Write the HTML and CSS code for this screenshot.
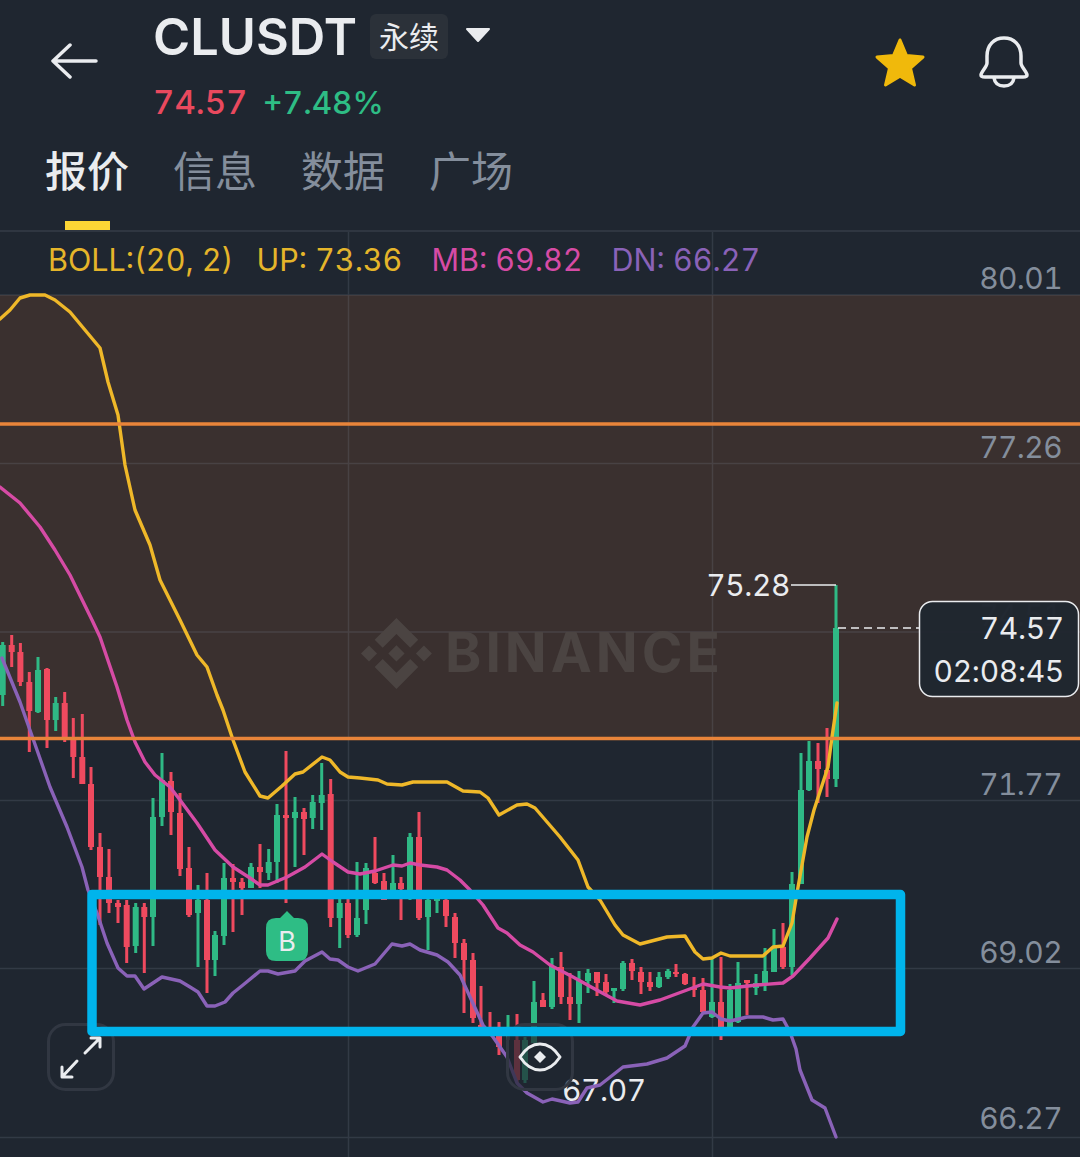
FILE: index.html
```html
<!DOCTYPE html>
<html lang="zh">
<head>
<meta charset="utf-8">
<title>CLUSDT</title>
<link rel="stylesheet" href="styles.css">
</head>
<body>
<div class="page">
  <header class="top">
    <svg class="back" width="48" height="40" viewBox="0 0 48 40"><path class="ico" d="M3 18H46M20 2 3 18l17 16"/></svg>
    <div class="titles">
      <div class="title-row">
        <h1 class="symbol">CLUSDT</h1>
        <span class="tag">永续</span>
        <svg class="caret" width="26" height="16" viewBox="0 0 26 16"><path class="caret-fill" d="M2 2H24L13 14Z"/></svg>
      </div>
      <div class="price-row"><span class="last">74.57</span><span class="chg">+7.48%</span></div>
    </div>
    <div class="actions">
      <svg width="54" height="54" viewBox="0 0 54 54"><path class="star" d="M27 5 33.500 20.500 50 22 37.500 33 41.500 50 27 41.200 12.500 50 16.500 33 4 22 20.500 20.500Z"/></svg>
      <svg width="54" height="54" viewBox="0 0 54 54"><path class="bell" d="M10 21C10 10 17 3 27 3S44 10 44 21V28C44 32 50 37 50 40Q50 42 46 42H8Q4 42 4 40C4 37 10 32 10 28ZM17 43C18 49 22 51 27 51S36 49 37 43"/></svg>
    </div>
  </header>
  <nav class="tabs">
    <a class="tab on">报价</a>
    <a class="tab">信息</a>
    <a class="tab">数据</a>
    <a class="tab">广场</a>
  </nav>
  <section class="chart">
    <div class="legend">
      <span class="lg-y">BOLL:(20, 2)</span>
      <span class="lg-y">UP: 73.36</span>
      <span class="lg-m">MB: 69.82</span>
      <span class="lg-p">DN: 66.27</span>
    </div>
    <svg class="plot" width="1080" height="925" viewBox="0 232 1080 925">
      <rect class="zone" x="0" y="295" width="1080" height="443"/>
      <path class="grid" d="M0 295H1080M0 463.500H1080M0 632H1080M0 800.500H1080M0 968.500H1080M0 1137.500H1080M348.500 232V1157M712.500 232V1157"/>
      <g class="mark">
        <path transform="translate(361 618) scale(.56)" d="M38.730 53.200 63.310 28.620 87.900 53.210 102.200 38.910 63.310 0 24.430 38.900ZM0 63.310 14.300 49 28.600 63.300 14.300 77.600ZM38.730 73.410 63.310 97.990 87.900 73.400 102.200 87.700 63.310 126.610 24.420 87.720ZM98.020 63.310 112.320 49 126.620 63.300 112.320 77.600ZM77.830 63.300 63.310 48.780 48.790 63.300 63.310 77.830Z"/>
        <text class="mark-t" x="445" y="672">BINANCE</text>
      </g>
      <path class="wick red" d="M11.700 635V667M20.400 643V686M29.300 672V752M47 668V748M64.700 692V742M73.300 718V778M82.300 714V784M91 767V850M100 833V925M109 849V913M118 900V923M126.700 900V963M144.300 903V973M171 772V835M180 793V876M189 847V917M207 873V993M233 864V932M242 878V915M260 844V888M286 751V903M304 808V855M330.700 779V927M348 890V938M375 837V884M384 873V900M401 877V920M419 812V920M446 893V927M455 913V958M464 939V1013M473 953V1023M481 986V1028M490 1012V1036M499 1022V1055M517 1014V1083M543 993V1007M561 952V1004M570 973V1020M597 972V996M606 974V995M632 959V980M641 967V994M650 972V991M676 964V977M685 973V985M694 977V997M703 978V1013M721 957V1040M747 980V1015M783 923V969M818 743V803M827 728V797"/>
      <path class="body red" d="M11.700 645V652M20.400 652V682M29.300 682V711M47 669V720M64.700 703V740M73.300 737V757M82.300 757V784M91 784V847M100 847V877M109 877V903M118 903V907M126.700 905V947M144.300 907V917M171 781V812M180 813V869M189 868V915M207 900V960M233 878V882M242 882V888M260 867V872M286 815V818M304 812V819M330.700 794V918M348 903V935M375 873V883M384 881V900M401 883V889M419 837V918M446 900V916M455 917V943M464 943V960M473 960V1018M481 1025V1033M499 1027V1047M517 1040V1080M543 1000V1007M561 967V997M570 997V1004M597 972V983M606 982V992M632 963V971M641 972V982M650 982V987M676 972V974M685 974V984M694 987V990M703 990V1012M721 1002V1027M747 980V983M783 947V967M818 761V769M827 770V779"/>
      <path class="wick grn" d="M2.700 642V706M38 657V713M55.700 697V731M135.700 903V953M153 798V946M162 753V826M198 885V967M215 931V976M224 863V945M251 863V888M268.700 849V880M277 804V883M295 797V867M312.700 795V829M321.700 763V830M339.700 890V948M357 862V937M366 863V924M393 855V895M410 833V900M428 893V950M437 893V913M508 1015V1040M525 1037V1083M534 981V1043M552 958V1009M579 971V1023M588 969V993M614 988V1003M623 961V991M659 972V988M668 969V979M712 958V1018M730 984V1027M738 962V1023M756 974V995M765 948V991M774 929V972M792 872V975M801 753V884M809 741V791M836 585V787"/>
      <path class="body grn" d="M2.700 645V695M38 670V712M55.700 703V720M135.700 907V946M153 817V917M162 780V817M198 900V913M215 935V960M224 878V936M251 867V888M268.700 862V873M277 815V862M295 812V818M312.700 802V818M321.700 795V803M339.700 903V918M357 918V935M366 868V910M393 883V895M410 837V895M428 900V917M437 893V901M525 1040V1080M534 1002V1043M552 966V1007M579 980V1004M588 973V981M614 988V991M623 963V989M659 977V987M668 971V977M712 1002V1017M730 990V1027M738 983V1022M756 983V988M765 971V983M774 947V972M792 884V967M801 790V884M809 761V790M836 628V779"/>
      <text class="hl start" x="562" y="1101">67.07</text>
      <polyline class="ln purple" points="2,658 20,702 37,750 50,787 67,827 82,867 88,890 97,913 107,943 118,968 127,976 135,976 144,989 162,977 180,981 190,987 198,992 207,1006 215,1006 225,1002 233,993 243,985 260,971 268,971 278,974 295,971 305,961 322,952 330,959 338,960 348,967 358,971 375,964 392,944 402,946 410,944 420,950 437,955 448,962 460,975 470,997 483,1025 493,1037 507,1057 517,1083 527,1093 543,1102 552,1099 570,1103 578,1102 587,1088 600,1085 623,1067 647,1064 667,1058 685,1046 693,1027 703,1013 712,1012 721,1019 730,1021 747,1017 763,1017 773,1020 783,1019 790,1032 796,1049 800,1070 812,1100 825,1108 836,1137"/>
      <polyline class="ln magenta" points="0,487 20,503 40,527 55,550 70,575 92,620 100,637 117,687 127,720 135,742 145,762 155,775 170,787 180,800 197,823 215,850 233,867 250,878 260,885 268,885 287,877 305,867 322,854 333,862 348,872 360,874 375,871 393,865 402,866 410,863 420,865 437,867 447,870 460,880 470,890 483,905 498,928 507,933 520,945 533,952 550,965 573,977 593,988 617,1001 640,1005 660,1000 687,990 703,984 720,987 730,988 757,985 783,983 793,976 810,958 828,938 837,919"/>
      <polyline class="ln yellow" points="0,319 10,310 20,298 30,295 45,295 55,300 70,312 85,330 100,348 108,382 118,415 125,465 135,510 150,545 160,580 180,620 197,655 207,667 217,695 223,710 233,740 245,772 260,796 268,798 282,786 295,774 303,772 322,757 330,760 340,772 348,777 360,778 378,780 387,784 402,785 413,782 447,782 463,791 480,792 488,798 499,815 517,805 527,804 535,808 560,837 578,860 588,887 600,900 615,925 623,935 640,944 667,937 685,936 695,952 703,959 712,958 721,953 730,956 763,956 773,947 783,946 792,923 797,893 807,837 814,810 828,767 832,737 837,703"/>
      <path class="orange" d="M0 424H1080M0 738.500H1080"/>
      <text class="axis" x="1062" y="289">80.01</text>
      <text class="axis" x="1062" y="458">77.26</text>
      <text class="axis dim" x="1062" y="626">74.51</text>
      <text class="axis" x="1062" y="795">71.77</text>
      <text class="axis" x="1062" y="963">69.02</text>
      <text class="axis" x="1062" y="1129">66.27</text>
      <path class="leader" d="M791 585H836"/>
      <text class="hl" x="790" y="596">75.28</text>
      <path class="dash" d="M838 628H919"/>
      <rect class="ptag" x="919.500" y="601.500" width="159" height="95" rx="13"/>
      <text class="pt" x="1064" y="639">74.57</text>
      <text class="pt" x="1064" y="682">02:08:45</text>
      <path class="badge" d="M287 911 294 918H298Q308 918 308 928V951Q308 961 298 961H276Q266 961 266 951V928Q266 918 276 918H280Z"/>
      <text class="badge-t" x="287" y="951">B</text>
      <rect class="btn" x="48.500" y="1024.500" width="65" height="65" rx="17"/>
      <rect class="btn see" x="507.500" y="1024.500" width="65" height="65" rx="17"/>
      <path class="box" d="M92 894.500H900.500V1031.500H92Z"/>
      <path class="ico thin" d="M85 1053 100 1038M91 1038H100V1047M77 1061 62 1077M62 1067V1077H72"/>
      <path class="ico thin" d="M520 1057C526 1048 533 1044 540 1044S554 1048 560 1057C554 1066 547 1070 540 1070S526 1066 520 1057Z"/>
      <path class="eye-dot" d="M540 1051 546 1057 540 1063 534 1057Z"/>
    </svg>
  </section>
</div>
</body>
</html>
```
FILE: styles.css
```css
*{box-sizing:border-box;margin:0;padding:0}
html,body{background:#1f2630}
body{width:1080px;height:1157px;overflow:hidden;font-family:Inter,"Noto Sans CJK SC",sans-serif;color:#eaecef;font-variant-numeric:tabular-nums}
.page{width:1080px;height:1157px;display:flex;flex-direction:column}
.top{height:132px;display:flex;align-items:flex-start;padding:14px 52px 0 50px}
.back{margin-top:29px;margin-right:55px;flex:none}
.titles{display:flex;flex-direction:column;flex:1}
.title-row{display:flex;align-items:center;height:45px}
.symbol{font-size:50.500px;font-weight:600;letter-spacing:0;line-height:45px;color:#eaecef}
.tag{margin-left:13px;width:78px;height:45px;border-radius:6px;background:#2b3139;font-size:30px;line-height:43px;text-align:center;font-family:"Noto Sans CJK SC",sans-serif;font-weight:400}
.caret{margin-left:17px;margin-top:-4px}
.caret-fill{fill:#eaecef;stroke:#eaecef;stroke-width:2;stroke-linejoin:round}
.price-row{display:flex;gap:15px;align-items:baseline;margin-top:23px;font-size:33px;line-height:40px;font-weight:500}
.last{color:#e9495e}
.chg{color:#2ebd85;font-size:31.500px}
.actions{display:flex;gap:50px;margin-top:21px;margin-right:-3px}
.ico{fill:none;stroke:#eaecef;stroke-width:3.500;stroke-linecap:round;stroke-linejoin:round}
.ico.thin{stroke-width:3}
.star{fill:#f0b90b;stroke:#f0b90b;stroke-width:3;stroke-linejoin:round}
.bell{fill:none;stroke:#eaecef;stroke-width:3.500;stroke-linejoin:round;stroke-linecap:round}
.tabs{height:100px;display:flex;gap:44px;padding:0 0 0 45px;border-bottom:2px solid #2f3641}
.tab{position:relative;height:98px;font-family:"Noto Sans CJK SC",sans-serif;font-size:42px;line-height:74px;color:#848e9c;font-weight:400}
.tab.on{color:#eaecef;font-weight:500}
.tab.on::after{content:"";position:absolute;left:20px;bottom:0;width:45px;height:9px;background:#fcd535}
.chart{position:relative;flex:1}
.legend{position:absolute;left:48px;top:8px;display:flex;gap:0;font-size:30.500px;line-height:40px}
.legend span{white-space:nowrap}
.lg-y{color:#e5b52a;margin-right:23px}
.lg-y+.lg-y{margin-right:29px}
.lg-m{color:#d64ba5;margin-right:29px}
.lg-p{color:#8a62b8}
.plot{display:block;position:absolute;left:0;top:0}
.zone{fill:#3a302f}
.grid{fill:none;stroke:rgba(132,142,156,.2);stroke-width:1.500}
.mark{fill:#4b4442}
.mark-t{font-family:Inter,sans-serif;font-weight:700;font-size:55px;letter-spacing:4px}
.wick{fill:none;stroke-width:3}
.body{fill:none;stroke-width:6}
.red{stroke:#ef4a5f}
.grn{stroke:#2fb985}
.ln{fill:none;stroke-width:3.400;stroke-linejoin:round;stroke-linecap:round}
.purple{stroke:#8a62b8}
.magenta{stroke:#d64ba5}
.yellow{stroke:#efb829}
.orange{fill:none;stroke:#e8843a;stroke-width:3.500}
.axis{font-size:30px;fill:#848e9c;text-anchor:end;letter-spacing:-.6px}
.axis.dim{fill:#5a5654}
.hl{font-size:30px;fill:#eaecef;text-anchor:end;letter-spacing:-.4px}
.hl.start{text-anchor:start}
.leader{fill:none;stroke:#eaecef;stroke-width:1.500}
.dash{fill:none;stroke:#eaecef;stroke-width:1.500;stroke-dasharray:8 5}
.ptag{fill:rgba(31,38,48,.94);stroke:#eaecef;stroke-width:1.500}
.pt{font-size:30px;fill:#eaecef;text-anchor:end;letter-spacing:-.3px}
.badge{fill:#2ebd85}
.badge-t{font-size:27px;fill:#eaecef;text-anchor:middle;font-weight:400}
.btn{fill:none;stroke:#313742;stroke-width:3}
.btn.see{fill:rgba(31,38,48,.7)}
.box{fill:none;stroke:#00b4ec;stroke-width:9.500;stroke-linejoin:round}
.eye-dot{fill:#eaecef}
```
